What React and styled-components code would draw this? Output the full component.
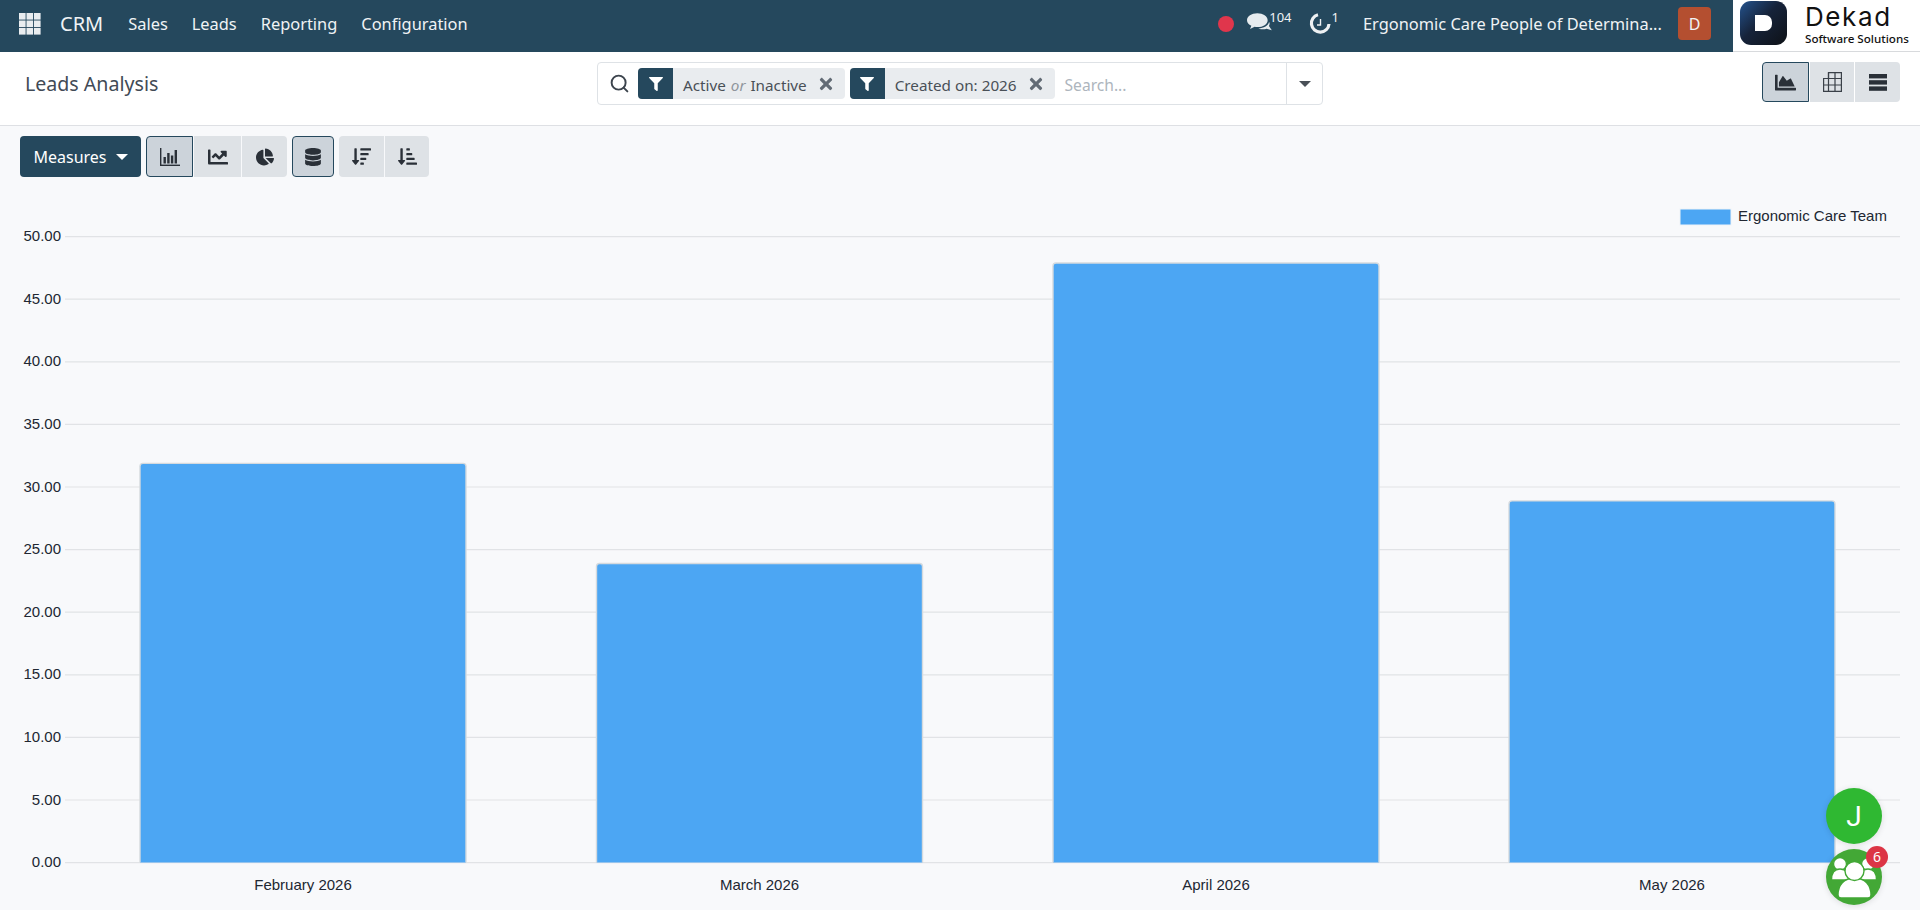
import React from 'react'
import styled, { createGlobalStyle } from 'styled-components'
import { FaChartLine, FaChartPie, FaDatabase, FaFilter, FaChartArea, FaSortAmountDown, FaSortAmountDownAlt, FaTimes } from 'react-icons/fa'
import { Search } from 'lucide-react'

const GlobalStyle = createGlobalStyle`
  html, body { margin: 0; padding: 0; height: 100%; overflow: hidden; }
  body { font-family: "Noto Sans", "Liberation Sans", sans-serif; background: #f8f9fb; color: #374151; }
  * { box-sizing: border-box; }
`

const Page = styled.div`
  width: 1920px;
  height: 910px;
  display: flex;
  flex-direction: column;
  position: relative;
  overflow: hidden;
`

const NavBar = styled.header`
  height: 52px;
  flex: none;
  display: flex;
  align-items: stretch;
  background: #25485d;
  color: #f0f3f5;
`
const NavLeft = styled.nav`
  display: flex;
  align-items: center;
  padding: 0 0 5px 19px;
`
const BrandName = styled.span`
  font-size: 20px;
  margin-left: 19px;
  margin-right: 25px;
`
const NavLink = styled.span`
  font-size: 16.4px;
  margin-right: 24px;
`
const NavRight = styled.div`
  margin-left: auto;
  display: flex;
  align-items: center;
  padding-bottom: 5px;
`
const RecordDot = styled.span`
  width: 16px;
  height: 16px;
  border-radius: 50%;
  background: #e0364c;
  margin-right: 13px;
`
const Systray = styled.span`
  display: flex;
  align-items: flex-start;
  margin-right: ${p => p.$gap}px;
  svg { display: block; }
`
const Counter = styled.sup`
  font-size: 13px;
  line-height: 13px;
  margin-left: ${p => p.$ml}px;
  margin-top: -2px;
  vertical-align: baseline;
`
const Company = styled.span`
  font-size: 16.4px;
  width: 301px;
  white-space: nowrap;
  margin-right: 14px;
`
const Avatar = styled.span`
  width: 33px;
  height: 33px;
  border-radius: 4px;
  background: #b44f30;
  display: flex;
  align-items: center;
  justify-content: center;
  font-size: 16px;
  margin-right: 22px;
`
const LogoBox = styled.div`
  width: 187px;
  background: #fff;
  border-bottom: 1px solid #d8dadd;
  display: flex;
  align-items: flex-start;
  padding: 1px 0 0 7px;
  color: #111;
`
const LogoMark = styled.div`
  width: 47px;
  height: 44px;
  border-radius: 11px;
  background: linear-gradient(135deg, #24538e 0%, #16233a 45%, #0e1116 100%);
  display: flex;
  align-items: center;
  justify-content: center;
`
const LogoGlyph = styled.span`
  width: 17px;
  height: 16px;
  background: #fff;
  border-radius: 0 7px 7px 0;
`
const LogoText = styled.div`
  margin-left: 18px;
  display: flex;
  flex-direction: column;
`
const LogoTitle = styled.span`
  font-family: Inter, "Noto Sans", sans-serif;
  font-size: 26px;
  font-weight: 400;
  letter-spacing: 1.6px;
`
const LogoSub = styled.span`
  font-size: 11.6px;
  line-height: 13px;
  font-weight: 500;
  white-space: nowrap;
`

const ControlPanel = styled.div`
  height: 74px;
  flex: none;
  background: #fff;
  border-bottom: 1px solid #dee0e4;
  display: flex;
  align-items: flex-start;
  padding: 10px 20px 0 25px;
`
const Title = styled.h1`
  margin: 8px 0 0;
  width: 572px;
  font-size: 19.6px;
  line-height: 27px;
  font-weight: 400;
  color: #414a55;
`
const SearchBox = styled.div`
  width: 726px;
  height: 43px;
  border: 1px solid #dee2e6;
  border-radius: 4px;
  display: flex;
  align-items: center;
  padding-left: 11px;
`
const Chip = styled.div`
  height: 31px;
  margin-left: ${p => p.$ml || 0}px;
  border-radius: 4px;
  background: #e9ecef;
  display: flex;
  align-items: center;
  font-size: 15.25px;
  color: #495057;
`
const ChipIcon = styled.span`
  width: 35px;
  height: 100%;
  border-radius: 4px 0 0 4px;
  background: #25485d;
  color: #fff;
  display: flex;
  align-items: center;
  justify-content: center;
`
const ChipLabel = styled.span`
  margin-left: 10px;
  margin-right: 10px;
  padding-top: 2px;
  white-space: nowrap;
  em { color: #8f959c; margin: 0 1px; }
`
const ChipClose = styled.span`
  display: flex;
  color: #626b75;
  margin-right: 10px;
`
const SearchInput = styled.span`
  flex: 1;
  margin-left: 10px;
  padding-top: 2px;
  font-size: 15.6px;
  color: #adb5bd;
`
const SearchToggle = styled.span`
  width: 36px;
  height: 100%;
  border-left: 1px solid #dee2e6;
  display: flex;
  align-items: center;
  justify-content: center;
`
const Caret = styled.i`
  width: 0;
  height: 0;
  border-left: 6px solid transparent;
  border-right: 6px solid transparent;
  border-top: 6px solid ${p => p.$color || '#495057'};
  margin-left: ${p => p.$ml || 0}px;
`
const ViewSwitch = styled.div`
  margin-left: auto;
  display: flex;
  gap: 1px;
`

const Toolbar = styled.div`
  height: 60px;
  flex: none;
  display: flex;
  align-items: flex-start;
  padding: 10px 0 0 20px;
`
const MeasureButton = styled.button`
  width: 121px;
  height: 41px;
  border: 0;
  border-radius: 4px;
  background: #25485d;
  color: #fff;
  font: 400 16px "Noto Sans", sans-serif;
  display: flex;
  align-items: center;
  justify-content: center;
  padding: 0;
`
const Group = styled.div`
  display: flex;
  margin-left: ${p => p.$ml}px;
  gap: 1px;
`
const IconButton = styled.button`
  width: ${p => p.$w}px;
  height: ${p => p.$h || 41}px;
  padding: 0;
  display: flex;
  align-items: center;
  justify-content: center;
  color: #2a3038;
  background: ${p => (p.$active ? '#ccd3da' : '#dee2e6')};
  border: ${p => (p.$active ? '1px solid #25485d' : '0')};
  border-radius: ${p => (p.$first ? '4px' : '0')} ${p => (p.$last ? '4px' : '0')} ${p => (p.$last ? '4px' : '0')} ${p => (p.$first ? '4px' : '0')};
`

const ChartArea = styled.main`
  flex: 1;
  min-height: 0;
`
const ChartSvg = styled.svg`
  display: block;
  text {
    font-family: "Liberation Sans", Arial, sans-serif;
    font-size: 15px;
    fill: #212732;
  }
`

const Bubble = styled.div`
  position: absolute;
  left: 1826px;
  top: ${p => p.$top}px;
  width: 56px;
  height: 56px;
  border-radius: 50%;
  background: ${p => p.$bg};
  color: #fff;
  display: flex;
  align-items: center;
  justify-content: center;
  font: 400 28px Roboto, sans-serif;
  box-shadow: 0 1px 6px rgba(0, 0, 0, 0.12);
`
const Badge = styled.span`
  position: absolute;
  left: 40px;
  top: -3px;
  width: 22px;
  height: 22px;
  border-radius: 50%;
  background: #dc3545;
  color: #fff;
  font: 400 14px/22px "Noto Sans", sans-serif;
  text-align: center;
`

const AppsIcon = () => (
  <svg width="22" height="22" viewBox="0 0 22 22" fill="#e9edf0">
    {[0, 7.5, 15].flatMap(y => [0, 7.5, 15].map(x => <rect key={`${x}-${y}`} x={x} y={y} width="6.6" height="6.6" />))}
  </svg>
)
const CommentsIcon = () => (
  <svg width="25" height="21" viewBox="0 0 23 19" fill="#e6ebee">
    <path d="M9.5 0 C14.8 0 19 2.8 19 6.4 C19 10 14.8 12.8 9.5 12.8 C8.6 12.8 7.8 12.7 7 12.6 L2.8 14.6 L4 11.6 C1.6 10.4 0 8.5 0 6.4 C0 2.8 4.2 0 9.5 0 Z" />
    <path d="M20.3 8.2 C21 8.9 21 10.6 20.2 11.8 L22.8 15.6 L18 14.4 C15.8 15.2 13 15 10.4 14 C15.6 14 19.6 11.6 20.3 8.2 Z" />
  </svg>
)
const ActivityIcon = () => (
  <svg width="22" height="21" viewBox="0 0 22 21" fill="none" stroke="#eef1f3">
    <path d="M9 1.8 A8.8 8.8 0 1 0 20 11" strokeWidth="3.2" />
    <path d="M11.5 6 V12 H8" strokeWidth="1.4" />
  </svg>
)
const BarsIcon = () => (
  <svg width="20" height="18" viewBox="0 0 20 18" fill="#2a3038">
    <rect x="0" y="0" width="1.4" height="18" />
    <rect x="0" y="16.6" width="20" height="1.4" />
    <rect x="3.5" y="9" width="2.4" height="6.5" />
    <rect x="7.2" y="5" width="2.4" height="10.5" />
    <rect x="10.9" y="7.5" width="2.4" height="8" />
    <rect x="14.6" y="2" width="2.4" height="13.5" />
  </svg>
)
const TableIcon = () => (
  <svg width="19" height="20" viewBox="0 0 19 20" fill="none" stroke="#3a4048" strokeWidth="1.2">
    <path d="M5.5 .6 H18.4 V19.4 H.6 V6.5 H5.5 Z" />
    <path d="M.6 13 H18.4 M5.5 6.5 H18.4 M5.5 .6 V19.4 M12 .6 V19.4" />
  </svg>
)
const ListIcon = () => (
  <svg width="18" height="17" viewBox="0 0 18 17" fill="#2a3038">
    <rect y="0" width="18" height="4.4" />
    <rect y="6.2" width="18" height="4.4" />
    <rect y="12.4" width="18" height="4.4" />
  </svg>
)
const TeamIcon = () => (
  <svg width="56" height="56" viewBox="0 0 56 56" fill="#fff" stroke="#43a836" strokeWidth="1.4">
    <circle cx="14" cy="15" r="6.5" />
    <circle cx="42" cy="15" r="6.5" />
    <path d="M5.5 31 C5.5 23 9 20 14 20 C20 20 23 23 23 31 Z" />
    <path d="M33 31 C33 23 36 20 42 20 C47 20 50.5 23 50.5 31 Z" />
    <path d="M12 46 C12 36 18 29 28.5 29 C39 29 45 36 45 46 C45 48 44 49 42 49 H15 C13 49 12 48 12 46 Z" />
    <circle cx="28.5" cy="22" r="9.5" />
  </svg>
)

const Y0 = 862.6
const UNIT = 12.52
const ticks = [0, 5, 10, 15, 20, 25, 30, 35, 40, 45, 50]
const bars = [
  { label: 'February 2026', x: 140, value: 32 },
  { label: 'March 2026', x: 596.5, value: 24 },
  { label: 'April 2026', x: 1053, value: 48 },
  { label: 'May 2026', x: 1509, value: 29 },
]

const Chart = () => (
  <ChartSvg width="1920" height="724" viewBox="0 186 1920 724">
    {ticks.map(t => (
      <g key={t}>
        <line x1="65" x2="1900" y1={Y0 - t * UNIT} y2={Y0 - t * UNIT} stroke="#e1e3e6" strokeWidth="1.2" />
        <text x="61" y={Y0 - t * UNIT + 4.5} textAnchor="end">{t.toFixed(2)}</text>
      </g>
    ))}
    {bars.map(b => {
      const top = Y0 - b.value * UNIT + 1.4
      return (
        <g key={b.label}>
          <path
            d={`M${b.x} ${Y0} V${top + 3} Q${b.x} ${top} ${b.x + 3} ${top} H${b.x + 323} Q${b.x + 326} ${top} ${b.x + 326} ${top + 3} V${Y0}`}
            fill="#4ca6f3"
            stroke="#d5dade"
            strokeWidth="1.4"
          />
          <text x={b.x + 163} y="890" textAnchor="middle">{b.label}</text>
        </g>
      )
    })}
    <rect x="1680" y="209" width="51" height="16" fill="#4ca6f3" stroke="#eef3f8" />
    <text x="1738" y="221">Ergonomic Care Team</text>
  </ChartSvg>
)

export default function App() {
  return (
    <Page>
      <GlobalStyle />
      <NavBar>
        <NavLeft>
          <AppsIcon />
          <BrandName>CRM</BrandName>
          <NavLink>Sales</NavLink>
          <NavLink>Leads</NavLink>
          <NavLink>Reporting</NavLink>
          <NavLink>Configuration</NavLink>
        </NavLeft>
        <NavRight>
          <RecordDot />
          <Systray $gap={17}><CommentsIcon /><Counter $ml={-3}>104</Counter></Systray>
          <Systray $gap={24}><ActivityIcon /><Counter $ml={1}>1</Counter></Systray>
          <Company>Ergonomic Care People of Determina...</Company>
          <Avatar>D</Avatar>
        </NavRight>
        <LogoBox>
          <LogoMark><LogoGlyph /></LogoMark>
          <LogoText>
            <LogoTitle>Dekad</LogoTitle>
            <LogoSub>Software Solutions</LogoSub>
          </LogoText>
        </LogoBox>
      </NavBar>

      <ControlPanel>
        <Title>Leads Analysis</Title>
        <SearchBox>
          <Search size={21} color="#3c444d" strokeWidth={2.2} />
          <Chip $ml={8}>
            <ChipIcon><FaFilter size={14} /></ChipIcon>
            <ChipLabel>Active <em>or</em> Inactive</ChipLabel>
            <ChipClose><FaTimes size={18} /></ChipClose>
          </Chip>
          <Chip $ml={5}>
            <ChipIcon><FaFilter size={14} /></ChipIcon>
            <ChipLabel>Created on: 2026</ChipLabel>
            <ChipClose><FaTimes size={18} /></ChipClose>
          </Chip>
          <SearchInput>Search...</SearchInput>
          <SearchToggle><Caret /></SearchToggle>
        </SearchBox>
        <ViewSwitch>
          <IconButton $w={47} $h={40} $first $active><FaChartArea size={21} /></IconButton>
          <IconButton $w={44} $h={40}><TableIcon /></IconButton>
          <IconButton $w={45} $h={40} $last><ListIcon /></IconButton>
        </ViewSwitch>
      </ControlPanel>

      <Toolbar>
        <MeasureButton>Measures<Caret $color="#fff" $ml={9} /></MeasureButton>
        <Group $ml={5}>
          <IconButton $w={47} $first $active><BarsIcon /></IconButton>
          <IconButton $w={47}><FaChartLine size={20} /></IconButton>
          <IconButton $w={45} $last><FaChartPie size={18} /></IconButton>
        </Group>
        <Group $ml={5}>
          <IconButton $w={42} $first $last $active><FaDatabase size={18} /></IconButton>
        </Group>
        <Group $ml={5}>
          <IconButton $w={45} $first><FaSortAmountDown size={19} /></IconButton>
          <IconButton $w={44} $last><FaSortAmountDownAlt size={19} /></IconButton>
        </Group>
      </Toolbar>

      <ChartArea><Chart /></ChartArea>

      <Bubble $top={788} $bg="#2fb832">J</Bubble>
      <Bubble $top={849} $bg="#43a836">
        <TeamIcon />
        <Badge>6</Badge>
      </Bubble>
    </Page>
  )
}
